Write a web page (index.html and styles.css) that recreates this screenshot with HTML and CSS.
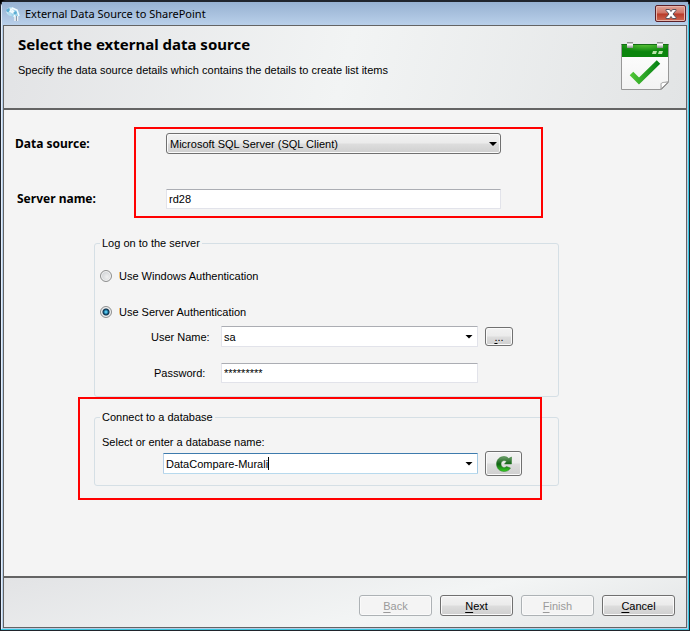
FILE: index.html
```html
<!DOCTYPE html>
<html lang="en">
<head>
<meta charset="utf-8">
<title>External Data Source to SharePoint</title>
<link rel="stylesheet" href="styles.css">
</head>
<body>
<div class="window">
  <div class="titlebar">
    <svg class="app-icon" width="16" height="16" viewBox="0 0 16 16" aria-hidden="true">
      <circle cx="6" cy="5.500" r="4.500" fill="#b4def0"/>
      <circle cx="10.500" cy="8" r="4" fill="#9dd2ea"/>
      <path d="M2 7 6 3l3 3M7 2l5 2 2 6M5 5l5 3-1 3" fill="none" stroke="#f5fcff" stroke-width="1.500"/>
      <path d="M1 4 4 2l1 2-2 3zM8 7l3-2 1 2-2 2z" fill="#5caed3"/>
      <path d="M10 10v5M12.500 10v5" stroke="#eef1f4" stroke-width="1.500"/>
      <path d="M11.500 10v5" stroke="#8b99a8"/>
    </svg>
    <span class="title">External Data Source to SharePoint</span>
    <button class="close" type="button" aria-label="Close">
      <svg width="12" height="10" viewBox="0 0 12 10" aria-hidden="true">
        <path d="M1 .5h3.500L6 2.500 7.500.5H11v1L8 5l3 3.500v1H7.500L6 7.500 4.500 9.500H1v-1L4 5 1 1.500z" fill="#fff" stroke="#58555f"/>
      </svg>
    </button>
  </div>

  <form class="client">
    <header class="header">
      <div class="intro">
        <h1>Select the external data source</h1>
        <p>Specify the data source details which contains the details to create list items</p>
      </div>
      <svg class="calendar" width="48" height="49" viewBox="0 0 48 49" aria-hidden="true">
        <defs>
          <linearGradient id="page" x2="0" y2="1"><stop offset="0" stop-color="#fff"/><stop offset="1" stop-color="#f3f3f3"/></linearGradient>
          <radialGradient id="band" cx=".5" cy="0" r=".6"><stop offset="0" stop-color="#5fc63a"/><stop offset="1" stop-color="#0b850d"/></radialGradient>
          <linearGradient id="tick" x2="1" y2="0"><stop offset="0" stop-color="#4fc436"/><stop offset="1" stop-color="#078315"/></linearGradient>
          <linearGradient id="clip" x2="0" y2="1"><stop offset="0" stop-color="#777"/><stop offset=".4" stop-color="#fff"/><stop offset="1" stop-color="#888"/></linearGradient>
        </defs>
        <path d="M.5 2.500h47v38l-7 7H.5z" fill="url(#page)" stroke="#989898"/>
        <path d="M1 2h46v13H1z" fill="url(#band)"/>
        <path d="M.5 2.500h47" stroke="#166d16"/>
        <path d="M6 0h6v6H6zM36 0h6v6h-6z" fill="url(#clip)"/>
        <path d="M32 9h4l-1 3h-4zM38 9h4l-1 3h-4z" fill="#b9e4a9"/>
        <path d="M10.500 31.500 18 39 37.500 20" fill="none" stroke="url(#tick)" stroke-width="5"/>
        <path d="M39.500 47.500c1-2 .5-3 .5-5 0-3 4-1.500 7.500-3z" fill="#fff" stroke="#989898"/>
      </svg>
    </header>

    <main class="main">
      <section class="source">
        <label for="source">Data source:</label>
        <div class="select-wrap">
          <select id="source" class="select"><option>Microsoft SQL Server (SQL Client)</option></select>
          <span class="arrow"></span>
        </div>
        <label class="server-label" for="server">Server name:</label>
        <input id="server" class="field" type="text" value="rd28">
        <div class="mark mark-source"></div>
      </section>

      <fieldset class="group logon">
        <legend>Log on to the server</legend>
        <label class="radio"><input type="radio" name="auth">Use Windows Authentication</label>
        <label class="radio"><input type="radio" name="auth" checked>Use Server Authentication</label>
        <div class="credentials">
          <label for="user">User Name:</label>
          <div class="combo">
            <input id="user" class="field" type="text" value="sa">
            <button class="drop" type="button" aria-label="Show user names"><span class="arrow"></span></button>
          </div>
          <button class="button browse" type="button" aria-label="Browse"><u>.</u>..</button>
          <label for="password">Password:</label>
          <input id="password" class="field" type="text" value="*********">
        </div>
      </fieldset>

      <fieldset class="group database">
        <legend>Connect to a database</legend>
        <label for="database">Select or enter a database name:</label>
        <div class="database-row">
          <div class="combo">
            <input id="database" class="field active" type="text" value="DataCompare-Murali">
            <span class="caret"></span>
            <button class="drop" type="button" aria-label="Show databases"><span class="arrow"></span></button>
          </div>
          <button class="button refresh" type="button" aria-label="Refresh">
            <svg width="16" height="16" viewBox="0 0 16 16" aria-hidden="true">
              <defs><linearGradient id="turn" x2="0" y2="1"><stop offset="0" stop-color="#6f9d6c"/><stop offset=".5" stop-color="#116315"/><stop offset="1" stop-color="#35cf20"/></linearGradient></defs>
              <path d="M15.500 1v7H8.500l2-2.500C8 3.500 5 5 5 8s3 5 5.500 2.500L14.500 12c-1.500 2.500-3.500 3.500-6.500 3.500C3.500 15.500.5 12 .5 8S3.500.5 8 .5c2 0 3.500.7 4.700 2z" fill="url(#turn)" stroke="#2a7b2a" stroke-width=".5"/>
            </svg>
          </button>
        </div>
        <div class="mark mark-database"></div>
      </fieldset>
    </main>

    <footer class="footer">
      <button class="button" type="button" disabled><u>B</u>ack</button>
      <button class="button" type="button"><u>N</u>ext</button>
      <button class="button" type="button" disabled><u>F</u>inish</button>
      <button class="button" type="button"><u>C</u>ancel</button>
    </footer>
  </form>
</div>
</body>
</html>
```
FILE: styles.css
```css
* {
  box-sizing: border-box;
}

body {
  margin: 0;
  background: #000;
  color: #000;
  font: 11px/14px "Liberation Sans", Arial, sans-serif;
}

input,
select,
button {
  margin: 0;
  color: inherit;
  font: inherit;
}

.window {
  display: flex;
  flex-direction: column;
  min-height: 100vh;
  padding: 0 2px 2px;
  border: 1px solid #20242c;
  border-top-width: 2px;
  border-radius: 6px 6px 0 0;
  background: #b5cde8;
  box-shadow: inset -1px -1px #35c8e0, inset 1px 1px #e4eefa;
}

.titlebar {
  display: flex;
  align-items: center;
  height: 23px;
  margin: 0 -1px;
  padding: 0 2px 0 3px;
  background: linear-gradient(#97b1d1, #b9d0ea);
}

.title {
  flex: 1;
  margin-left: 4px;
  font: 11px/16px "Noto Sans", "Open Sans", sans-serif;
}

.close {
  display: flex;
  align-items: center;
  justify-content: center;
  width: 31px;
  height: 17px;
  padding: 0;
  border: 1px solid #5b2028;
  border-radius: 2px;
  background: linear-gradient(#dfa398, #cf7263 48%, #b83a28 52%, #cd6a55);
  box-shadow: inset 0 0 0 1px #e6b5ab;
}

.client {
  display: flex;
  flex: 1;
  flex-direction: column;
  border: 1px solid #646464;
  background: #f4f4f4;
}

.header {
  display: flex;
  justify-content: space-between;
  height: 84px;
  padding: 8px 17px 0 14px;
  border-bottom: 2px solid #646464;
  background: linear-gradient(105deg, #e2e3e5, #f2f4f4 50%, #e2e4e5);
}

.calendar {
  margin-top: 8px;
}

h1 {
  margin: 0;
  font: bold 15px/20px "Noto Sans", Tahoma, sans-serif;
}

.intro p {
  margin: 9px 0 0;
}

.main {
  flex: 1;
  padding: 23px 11px 0;
}

.source {
  position: relative;
  display: grid;
  grid-template-columns: 151px 335px;
  row-gap: 35px;
  align-items: center;
}

.source label {
  font: bold 12px/20px "Noto Sans", Tahoma, sans-serif;
}

.source .server-label {
  padding-left: 2px;
}

.select-wrap,
.combo {
  position: relative;
}

.select {
  display: block;
  width: 100%;
  height: 21px;
  padding: 0 20px 0 3px;
  border: 1px solid #707070;
  border-radius: 3px;
  appearance: none;
  background: linear-gradient(#f2f2f2, #ebebeb 48%, #dddddd 52%, #cfcfcf);
  box-shadow: inset 0 0 0 1px #fafafa;
}

.arrow {
  display: block;
  width: 8px;
  height: 4px;
  background: #000;
  clip-path: polygon(0 0, 100% 0, 50% 100%);
}

.select-wrap .arrow {
  position: absolute;
  top: 9px;
  right: 4px;
  pointer-events: none;
}

.field {
  display: block;
  width: 100%;
  height: 20px;
  padding: 0 2px;
  border: 1px solid #e2e3ea;
  border-top-color: #abadb3;
  border-radius: 1px;
  background: #fff;
  outline: 0;
}

.combo .field {
  height: 21px;
  padding: 0 20px 0 2px;
}

.combo .field.active {
  border-color: #3d7bad #a4c9e3 #b7d9ed #b5cfe7;
}

.drop {
  position: absolute;
  top: 1px;
  right: 1px;
  display: flex;
  align-items: center;
  justify-content: center;
  width: 16px;
  height: 19px;
  padding: 0;
  border: 0;
  background: transparent;
}

.caret {
  position: absolute;
  top: 4px;
  left: 105px;
  width: 1px;
  height: 13px;
  background: #000;
}

.mark {
  position: absolute;
  border: 2px solid #f00;
  pointer-events: none;
}

.mark-source {
  inset: -6px auto -9px 119px;
  width: 409px;
}

.group {
  position: relative;
  width: 465px;
  min-width: 0;
  margin: 0 0 0 79px;
  padding: 0;
  border: 1px solid #d5dfe5;
  border-radius: 3px;
}

.group legend {
  margin-left: 5px;
  padding: 0 2px;
}

.logon {
  height: 161px;
  margin-top: 27px;
}

.radio {
  display: flex;
  align-items: center;
  gap: 7px;
  margin: 19px 0 22px 5px;
}

.radio + .radio {
  margin-bottom: 7px;
}

.radio input {
  width: 12px;
  height: 12px;
  border: 1px solid #8e8f8f;
  border-radius: 50%;
  appearance: none;
  background: radial-gradient(circle at 60% 60%, #f0f0f0, #c4c8cc);
  box-shadow: inset 0 0 0 1px #f4f4f4;
}

.radio input:checked {
  background: radial-gradient(circle, #55c4ea 0 1px, #17678f 2px, #12344c 3px, #d4d8dc 4px);
}

.credentials {
  display: grid;
  grid-template-columns: 70px 257px 28px;
  gap: 16px 7px;
  align-items: center;
  margin-left: 49px;
}

.credentials > label {
  padding-left: 7px;
}

.credentials label[for="password"] {
  padding-left: 10px;
}

.button {
  width: 73px;
  height: 21px;
  padding: 0;
  border: 1px solid #707070;
  border-radius: 3px;
  background: linear-gradient(#f2f2f2, #ebebeb 48%, #dddddd 52%, #cfcfcf);
  box-shadow: inset 0 0 0 1px #fafafa;
}

.button:disabled {
  border-color: #adb2b5;
  background: #f4f4f4;
  color: #9a9a9a;
}

.button u {
  text-underline-offset: 2px;
}

.button.browse {
  width: 28px;
  height: 19px;
}

.database {
  height: 76px;
  margin-top: 13px;
}

.database > label {
  display: block;
  margin: 11px 0 2px 7px;
}

.database-row {
  display: grid;
  grid-template-columns: 315px 37px;
  gap: 7px;
  align-items: center;
  margin-left: 68px;
}

.button.refresh {
  display: flex;
  align-items: center;
  justify-content: center;
  width: 37px;
  height: 25px;
}

.mark-database {
  top: -27px;
  left: -17px;
  width: 464px;
  height: 103px;
}

.footer {
  display: flex;
  justify-content: flex-end;
  gap: 8px;
  height: 51px;
  padding: 17px 11px 0;
  border-top: 2px solid #646464;
  background: linear-gradient(165deg, #e2e3e5, #f3f5f5 60%, #e2e4e5);
}
```
